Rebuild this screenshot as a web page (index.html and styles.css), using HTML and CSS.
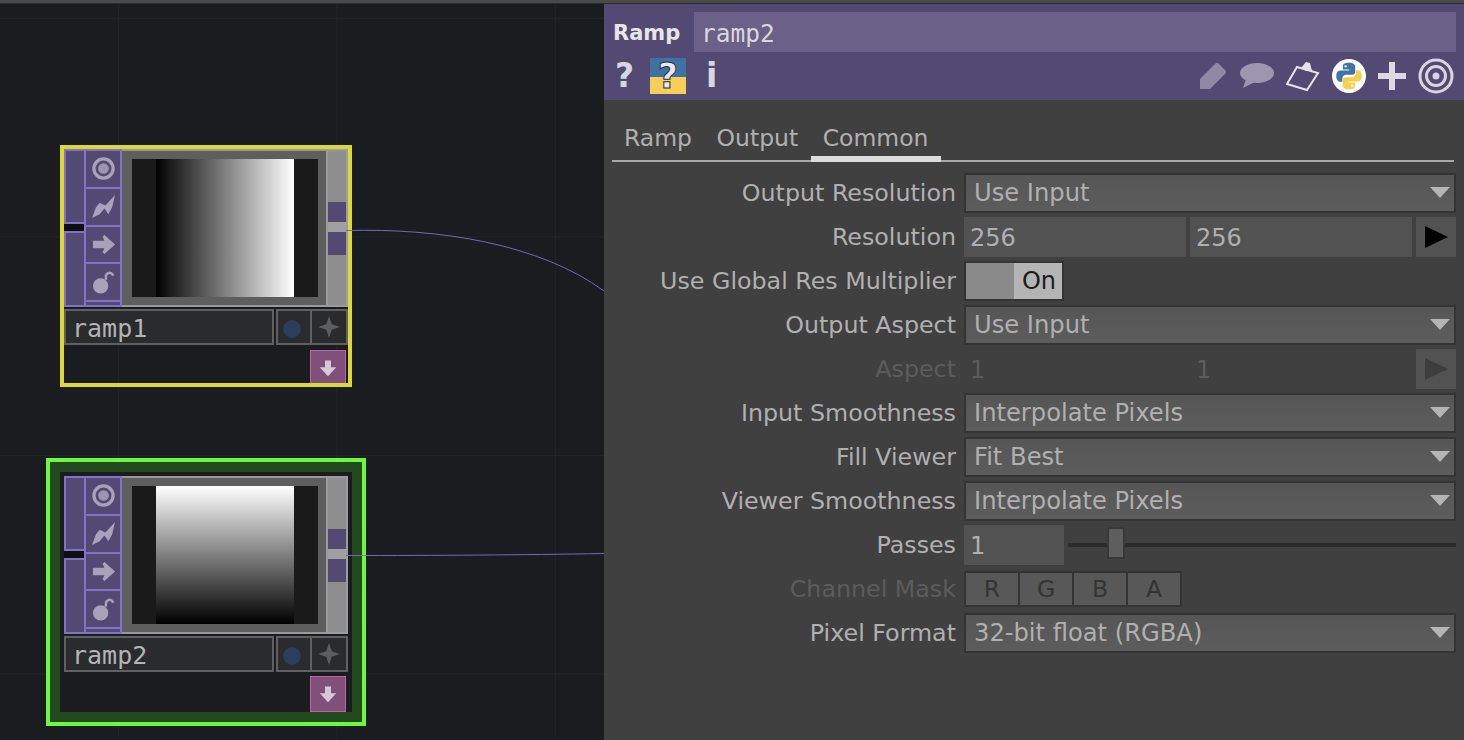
FILE: index.html
```html
<!DOCTYPE html>
<html lang="en">
<head>
    <meta charset="UTF-8" />
    <title>Ramp</title>
    <link rel="stylesheet" href="styles.css">
</head>
<body>

<svg class="defs" width="0" height="0">
    <symbol id="i-view" viewBox="0 0 24 24">
        <circle cx="12" cy="12" r="10" fill="none" stroke="currentColor" stroke-width="3.4"/>
        <circle cx="12" cy="12" r="5.6" fill="currentColor" fill-opacity=".85"/>
    </symbol>
    <symbol id="i-bolt" viewBox="0 0 24 24">
        <path d="M0 24 L4 13 L8 8 L14 11 L24 0 L21 13 L17 20 L13 14 L8 20 Z" fill="currentColor"/>
    </symbol>
    <symbol id="i-arrow" viewBox="0 0 24 24">
        <path d="M13 2 L24 12 L13 22 L11 20 L13 16 L1 16 L1 8 L13 8 L11 4 Z" fill="currentColor"/>
    </symbol>
    <symbol id="i-lock" viewBox="0 0 24 24">
        <circle cx="9" cy="15.5" r="8" fill="currentColor"/>
        <path d="M14.5 9 V6.5 A3.8 3.8 0 0 1 22 5" fill="none" stroke="currentColor" stroke-width="2.6"/>
    </symbol>
    <symbol id="i-star" viewBox="0 0 24 24">
        <path d="M12 0 L15 9 L24 12 L15 15 L12 24 L9 15 L0 12 L9 9 Z" fill="currentColor"/>
    </symbol>
    <symbol id="i-down" viewBox="0 0 24 24">
        <path d="M8 2 H16 V11 H23 L12 23 L1 11 H8 Z" fill="currentColor"/>
    </symbol>
</svg>

<div class="top-strip"></div>

<div class="main">
    <div class="network">
        <div class="node node-selected">
            <div class="node-view">
                <div class="strip-inputs">
                    <div class="input-slot"></div>
                    <div class="input-slot"></div>
                </div>
                <div class="strip-flags">
                    <div class="flag"><svg><use href="#i-view"/></svg></div>
                    <div class="flag"><svg><use href="#i-bolt"/></svg></div>
                    <div class="flag"><svg><use href="#i-arrow"/></svg></div>
                    <div class="flag"><svg><use href="#i-lock"/></svg></div>
                    <div class="flag flag-end"></div>
                </div>
                <div class="viewer"><div class="viewer-bg"><div class="ramp ramp-h"></div></div></div>
                <div class="strip-outputs">
                    <div class="out-a"></div>
                    <div class="out-b"></div>
                </div>
            </div>
            <div class="node-name">
                <div class="name-box">ramp1</div>
                <div class="name-btn"><span class="dot"></span></div>
                <div class="name-btn"><svg class="star"><use href="#i-star"/></svg></div>
            </div>
            <div class="node-foot"><div class="pink"><svg><use href="#i-down"/></svg></div></div>
        </div>

        <div class="node node-current">
            <div class="node-view">
                <div class="strip-inputs">
                    <div class="input-slot"></div>
                    <div class="input-slot"></div>
                </div>
                <div class="strip-flags">
                    <div class="flag"><svg><use href="#i-view"/></svg></div>
                    <div class="flag"><svg><use href="#i-bolt"/></svg></div>
                    <div class="flag"><svg><use href="#i-arrow"/></svg></div>
                    <div class="flag"><svg><use href="#i-lock"/></svg></div>
                    <div class="flag flag-end"></div>
                </div>
                <div class="viewer"><div class="viewer-bg"><div class="ramp ramp-v"></div></div></div>
                <div class="strip-outputs">
                    <div class="out-a"></div>
                    <div class="out-b"></div>
                </div>
            </div>
            <div class="node-name">
                <div class="name-box">ramp2</div>
                <div class="name-btn"><span class="dot"></span></div>
                <div class="name-btn"><svg class="star"><use href="#i-star"/></svg></div>
            </div>
            <div class="node-foot"><div class="pink"><svg><use href="#i-down"/></svg></div></div>
        </div>

        <svg class="wires" width="604" height="736">
            <path d="M346 226.5 C 440 224, 540 240, 604 287" />
            <path d="M346 551.5 C 440 551.5, 520 551, 604 549.5" />
        </svg>
    </div>

    <div class="panel">
        <div class="head">
            <div class="head-top">
                <div class="op-type">Ramp</div>
                <div class="op-name">ramp2</div>
            </div>
            <div class="head-icons">
                <div class="icons-left">
                    <span class="glyph">?</span>
                    <span class="py-help"><span class="py-help-q">?</span></span>
                    <span class="glyph glyph-i">i</span>
                </div>
                <div class="icons-right">
                    <svg class="ic-pencil" width="28" height="28" viewBox="0 0 28 28"><path d="M1 27 L1 17 L16 2 Q18 0 20 2 L26 8 Q28 10 26 12 L11 27 Z" fill="#8f89a4"/></svg>
                    <svg width="34" height="26" viewBox="0 0 34 26"><ellipse cx="17" cy="10" rx="17" ry="10" fill="#9c96ae"/><path d="M6 16 L3 25 L15 19 Z" fill="#9c96ae"/></svg>
                    <svg width="34" height="32" viewBox="0 0 34 32"><path d="M11 7 L32 13 L21 30 L1 24 Z" fill="none" stroke="#e6e3ec" stroke-width="2"/><path d="M15 8 L20 2 L24 3 L26 11 L20 11 Z" fill="#e6e3ec"/></svg>
                    <svg width="34" height="34" viewBox="0 0 36 36">
                        <circle cx="18" cy="18" r="18" fill="#fff"/>
                        <path d="M17.8 4 C12 4 11.5 6.5 11.5 8 V11 H18.2 V12.2 H8.5 C6 12.2 4.5 14.5 4.5 18 C4.5 21.5 6 24 8.5 24 H11 V20.6 C11 18.4 13 16.6 15 16.6 H21.6 C23.4 16.6 24.6 15.2 24.6 13.4 V8 C24.6 6 22.8 4 17.8 4 Z" fill="#3d75a8"/>
                        <path d="M18.2 32 C24 32 24.5 29.5 24.5 28 V25 H17.8 V23.8 H27.5 C30 23.8 31.5 21.5 31.5 18 C31.5 14.5 30 12 27.5 12 H25 V15.4 C25 17.6 23 19.4 21 19.4 H14.4 C12.6 19.4 11.4 20.8 11.4 22.6 V28 C11.4 30 13.2 32 18.2 32 Z" fill="#f5d04f"/>
                        <circle cx="14.5" cy="7.8" r="1.3" fill="#fff"/>
                        <circle cx="21.5" cy="28.2" r="1.3" fill="#fff"/>
                    </svg>
                    <svg class="ic-plus" width="28" height="28" viewBox="0 0 28 28"><path d="M11 0 H17 V11 H28 V17 H17 V28 H11 V17 H0 V11 H11 Z" fill="#dcd9e4"/></svg>
                    <svg width="36" height="36" viewBox="0 0 36 36" fill="none" stroke="#d8d5e0" stroke-width="3"><circle cx="18" cy="18" r="16"/><circle cx="18" cy="18" r="9.5"/><circle cx="18" cy="18" r="3.5" fill="#d8d5e0" stroke="none"/></svg>
                </div>
            </div>
        </div>

        <div class="tabs">
            <div class="tab">Ramp</div>
            <div class="tab">Output</div>
            <div class="tab tab-active">Common</div>
        </div>

        <div class="params">
            <div class="row">
                <div class="label">Output Resolution</div>
                <div class="menu">Use Input</div>
            </div>
            <div class="row">
                <div class="label">Resolution</div>
                <div class="num">256</div>
                <div class="num">256</div>
                <div class="play"></div>
            </div>
            <div class="row">
                <div class="label">Use Global Res Multiplier</div>
                <div class="toggle"><span class="toggle-off"></span><span class="toggle-on">On</span></div>
            </div>
            <div class="row">
                <div class="label">Output Aspect</div>
                <div class="menu">Use Input</div>
            </div>
            <div class="row row-off">
                <div class="label">Aspect</div>
                <div class="num">1</div>
                <div class="num">1</div>
                <div class="play"></div>
            </div>
            <div class="row">
                <div class="label">Input Smoothness</div>
                <div class="menu">Interpolate Pixels</div>
            </div>
            <div class="row">
                <div class="label">Fill Viewer</div>
                <div class="menu">Fit Best</div>
            </div>
            <div class="row">
                <div class="label">Viewer Smoothness</div>
                <div class="menu">Interpolate Pixels</div>
            </div>
            <div class="row">
                <div class="label">Passes</div>
                <div class="num num-short">1</div>
                <div class="slider"><span class="thumb"></span></div>
            </div>
            <div class="row row-off">
                <div class="label">Channel Mask</div>
                <div class="mask">
                    <span class="chan">R</span>
                    <span class="chan">G</span>
                    <span class="chan">B</span>
                    <span class="chan">A</span>
                </div>
            </div>
            <div class="row">
                <div class="label">Pixel Format</div>
                <div class="menu">32-bit float (RGBA)</div>
            </div>
        </div>
    </div>
</div>

</body>
</html>
```

FILE: styles.css
```css
body {
    margin: 0;
    width: 1464px;
    height: 740px;
    overflow: hidden;
    background-color: #1b1c20;
    font-family: "DejaVu Sans", sans-serif;
}

.defs {
    position: absolute;
}

.top-strip {
    height: 3px;
    background-color: #4a4a4a;
    border-bottom: 1px solid #2c2c2c;
}

.main {
    display: flex;
    height: 736px;
}

/* network editor */
.network {
    position: relative;
    width: 604px;
    flex-shrink: 0;
    background-color: #1b1c20;
    background-image:
        linear-gradient(#222327 1px, transparent 1px),
        linear-gradient(90deg, #222327 1px, transparent 1px);
    background-size: 218.5px 218.5px;
    background-position: 118px 14px;
}

.wires {
    position: absolute;
    left: 0;
    top: 0;
}

.wires path {
    fill: none;
    stroke: #7468b8;
    stroke-width: 1;
}

.node {
    position: absolute;
    display: flex;
    flex-direction: column;
    width: 284px;
    overflow: hidden;
}

.node-selected {
    left: 60px;
    top: 141px;
    height: 234px;
    border: 4px solid #dcd838;
}

.node-current {
    left: 46px;
    top: 454px;
    height: 232px;
    padding: 4px;
    background-color: #1b1c20;
    border: 14px solid #234a1e;
    outline: 4px solid #6cf83c;
    outline-offset: -4px;
}

.node-view {
    display: flex;
    height: 158px;
    background-color: #999;
    flex-shrink: 0;
}

.strip-inputs {
    display: flex;
    flex-direction: column;
    width: 20px;
    background-color: #0e0e10;
    justify-content: space-between;
}

.input-slot {
    height: 75px;
    box-sizing: border-box;
    background-color: #524a72;
    border: 2px solid #8072c4;
    border-right: none;
}

.input-slot:last-child {
    height: 76px;
}

.strip-flags {
    display: flex;
    flex-direction: column;
    width: 38px;
    box-sizing: border-box;
    background-color: #524a72;
    border: 2px solid #8072c4;
    border-top: none;
    border-bottom: none;
}

.flag {
    display: flex;
    align-items: center;
    justify-content: center;
    height: 37.75px;
    box-sizing: border-box;
    flex-shrink: 0;
    border-top: 2px solid #8072c4;
    color: #a8a2ba;
}

.flag svg {
    width: 23px;
    height: 23px;
}

.flag-end {
    height: 7px;
    border-bottom: 2px solid #8072c4;
}

.viewer {
    flex: 1;
    margin: 2px 0;
    padding: 8px 8px 8px 10px;
    background-color: #5e5e5e;
}

.viewer-bg {
    display: flex;
    justify-content: center;
    height: 100%;
    background-color: #1a1a1a;
}

.ramp {
    width: 138px;
}

.ramp-h {
    background-image: linear-gradient(90deg, #000, #fff);
}

.ramp-v {
    background-image: linear-gradient(#fff, #000);
}

.strip-outputs {
    width: 22px;
    box-sizing: border-box;
    padding-top: 51px;
    background-color: #8e8e8e;
    border: 2px solid #9c9c9c;
}

.out-a,
.out-b {
    width: 18px;
    background-color: #524a72;
}

.out-a {
    height: 20px;
    background-clip: padding-box;
    border-bottom: 10px solid #a0a0a0;
}

.out-b {
    height: 23px;
}

.node-name {
    display: flex;
    height: 36px;
    margin-top: 2px;
    flex-shrink: 0;
}

.name-box {
    width: 210px;
    box-sizing: border-box;
    padding-left: 6px;
    margin-right: 2px;
    border: 2px solid #606060;
    background-color: #2a2b2c;
    color: #b4b4b4;
    font-family: "DejaVu Sans Mono", monospace;
    font-size: 25px;
    line-height: 35px;
}

.name-btn {
    display: flex;
    align-items: center;
    justify-content: center;
    width: 36px;
    box-sizing: border-box;
    border: 2px solid #606060;
    background-color: #2a2b2c;
}

.name-btn + .name-btn {
    border-left: none;
}

.dot {
    width: 18px;
    height: 18px;
    margin: 4px 4px 0 0;
    border-radius: 50%;
    background-color: #2d3d5e;
}

.star {
    width: 22px;
    height: 22px;
    color: #5a5e5c;
}

.node-foot {
    display: flex;
    justify-content: flex-end;
    padding: 5px 2px 0 0;
}

.node-current .node-foot {
    padding-top: 4px;
}

.pink {
    display: flex;
    align-items: center;
    justify-content: center;
    width: 36px;
    height: 36px;
    flex-shrink: 0;
    box-sizing: border-box;
    background-color: #80507a;
    border: 1px solid #b868a8;
    color: #d4c8d4;
}

.pink svg {
    width: 18px;
    height: 18px;
}

/* parameter dialog */
.panel {
    flex: 1;
    background-color: #404040;
}

.head {
    height: 96px;
    padding: 8px 8px 0 9px;
    box-sizing: border-box;
    background-color: #524a72;
}

.head-top {
    display: flex;
    height: 40px;
    align-items: center;
}

.op-type {
    width: 81px;
    padding-top: 2px;
    color: #e6e6e6;
    font-size: 21px;
    font-weight: bold;
}

.op-name {
    flex: 1;
    height: 40px;
    padding-left: 7px;
    background-color: #6a6088;
    color: #d8d8d8;
    font-family: "DejaVu Sans Mono", monospace;
    font-size: 24.5px;
    line-height: 43px;
}

.head-icons {
    display: flex;
    justify-content: space-between;
    align-items: center;
    height: 48px;
    box-sizing: border-box;
}

.icons-left {
    display: flex;
    align-items: center;
    gap: 17px;
    padding-left: 2px;
}

.icons-right {
    display: flex;
    align-items: center;
    gap: 12px;
    padding-right: 2px;
}

.ic-pencil {
    margin-right: 1px;
}

.glyph {
    width: 18px;
    color: #d8d6e0;
    font-size: 33px;
    font-weight: bold;
    text-align: center;
    line-height: 38px;
}

.glyph-i {
    width: 11px;
    margin-left: 3px;
}

.py-help {
    display: block;
    width: 36px;
    height: 36px;
    background-image: linear-gradient(#3f72a0 53%, #f5cf58 53%);
    text-align: center;
}

.py-help-q {
    color: #e8e8ee;
    font-size: 35px;
    font-weight: bold;
    line-height: 36px;
    -webkit-text-stroke: 1px #2c2c44;
}

.tabs {
    display: flex;
    height: 62px;
    margin: 0 10px 0 8px;
    padding-top: 20px;
    box-sizing: border-box;
    border-bottom: 2px solid #a8a8a8;
}

.tab {
    padding: 0 12.5px 0 12px;
    color: #b0b0b0;
    font-size: 23.5px;
    line-height: 36px;
    height: 42px;
    box-sizing: border-box;
}

.tab-active {
    border-bottom: 6px solid #dcdcdc;
}

.params {
    display: flex;
    flex-direction: column;
    padding: 9px 8px 0 0;
}

.row {
    display: flex;
    align-items: center;
    gap: 4px;
    height: 44px;
    flex-shrink: 0;
}

.label {
    width: 352px;
    margin-right: 4px;
    color: #b0b0b0;
    font-size: 23.75px;
    text-align: right;
    white-space: nowrap;
}

.row-off .label {
    color: #5c5c5c;
}

.menu {
    flex: 1;
    height: 40px;
    padding-left: 8px;
    box-sizing: border-box;
    position: relative;
    background-image: linear-gradient(#565656, #5c5c5c);
    border: 2px solid #343434;
    color: #b0b0b0;
    font-size: 24.2px;
    line-height: 37px;
}

.menu::after {
    content: "";
    position: absolute;
    right: 4px;
    top: 12px;
    border-top: 11px solid #b4b4b4;
    border-left: 10px solid transparent;
    border-right: 10px solid transparent;
}

.num {
    width: 222px;
    height: 40px;
    padding-left: 6px;
    box-sizing: border-box;
    background-color: #525252;
    color: #b0b0b0;
    font-size: 24px;
    line-height: 42px;
}

.num-short {
    width: 100px;
}

.play {
    display: flex;
    align-items: center;
    justify-content: center;
    width: 40px;
    height: 40px;
    background-color: #525252;
}

.play::before {
    content: "";
    border-left: 23px solid #000;
    border-top: 11px solid transparent;
    border-bottom: 11px solid transparent;
}

.row-off .num {
    background-color: transparent;
    color: #5c5c5c;
}

.row-off .play::before {
    border-left-color: #3e3e3e;
}

.toggle {
    display: flex;
    width: 100px;
    height: 40px;
    box-sizing: border-box;
    border: 2px solid #343434;
}

.toggle-off {
    width: 48px;
    background-color: #8a8a8a;
}

.toggle-on {
    flex: 1;
    padding-left: 2px;
    background-color: #b4b4b4;
    color: #1c1c1c;
    font-size: 24px;
    line-height: 36px;
    text-align: center;
}

.slider {
    position: relative;
    flex: 1;
    height: 4px;
    background-color: #2c2c2c;
}

.thumb {
    position: absolute;
    left: 39px;
    top: -16px;
    width: 18px;
    height: 32px;
    box-sizing: border-box;
    background-color: #5e5e5e;
    border: 2px solid #383838;
}

.mask {
    display: flex;
    height: 36px;
    box-sizing: border-box;
    background-color: #343434;
    gap: 2px;
    padding: 2px;
}

.chan {
    width: 52px;
    background-color: #585858;
    color: #343434;
    font-size: 23.5px;
    line-height: 32px;
    text-align: center;
}
```
